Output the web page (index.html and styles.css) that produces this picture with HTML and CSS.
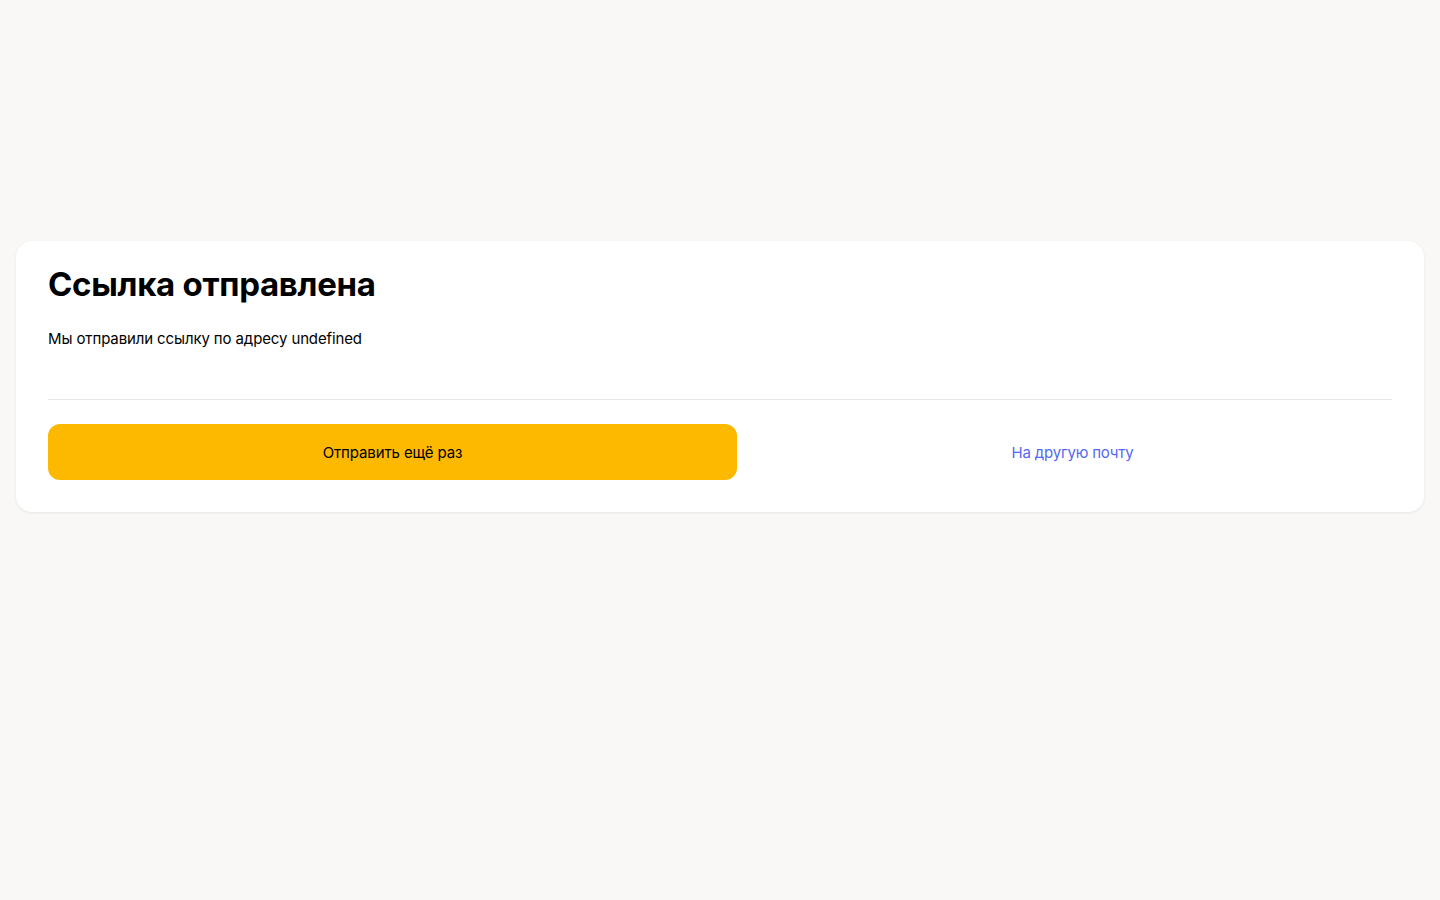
FILE: index.html
```html
<!DOCTYPE html>
<html lang="ru">
<head>
<meta charset="utf-8">
<title>Ссылка отправлена</title>
<link rel="stylesheet" href="styles.css">
</head>
<body>
<main class="page">
  <section class="card">
    <h1 class="title">Ссылка отправлена</h1>
    <p class="text">Мы отправили ссылку по адресу undefined</p>
    <hr class="divider">
    <div class="actions">
      <button class="btn-primary" type="button">Отправить ещё раз</button>
      <a class="link" href="#">На другую почту</a>
    </div>
  </section>
</main>
</body>
</html>
```
FILE: styles.css
```css
* { box-sizing: border-box; }
html, body { margin: 0; padding: 0; }
body {
  background: #f9f8f6;
  font-family: Inter, "Noto Sans", sans-serif;
  color: #000;
  min-height: 900px;
}
.page {
  padding: 241px 16px 0;
}
.card {
  background: #fff;
  border-radius: 16px;
  box-shadow: 0 1px 3px rgba(0,0,0,0.08);
  padding: 22px 32px 32px;
}
.title {
  margin: 0;
  font-size: 33px;
  line-height: 42px;
  font-weight: 700;
  letter-spacing: -0.3px;
}
.text {
  margin: 23px 0 0;
  font-size: 15px;
  line-height: 22px;
  font-weight: 400;
  letter-spacing: -0.12px;
}
.divider {
  border: 0;
  border-top: 1px solid #e8e8e8;
  margin: 49px 0 24px;
}
.actions {
  display: flex;
  gap: 16px;
  align-items: center;
}
.btn-primary {
  width: 689px;
  height: 56px;
  border: 0;
  border-radius: 12px;
  background: #fdb900;
  font-family: inherit;
  font-size: 15px;
  letter-spacing: -0.12px;
  color: #000;
  cursor: pointer;
}
.link {
  flex: 1;
  text-align: center;
  color: #5568f5;
  text-decoration: none;
  font-size: 15px;
  letter-spacing: -0.2px;
}
```
